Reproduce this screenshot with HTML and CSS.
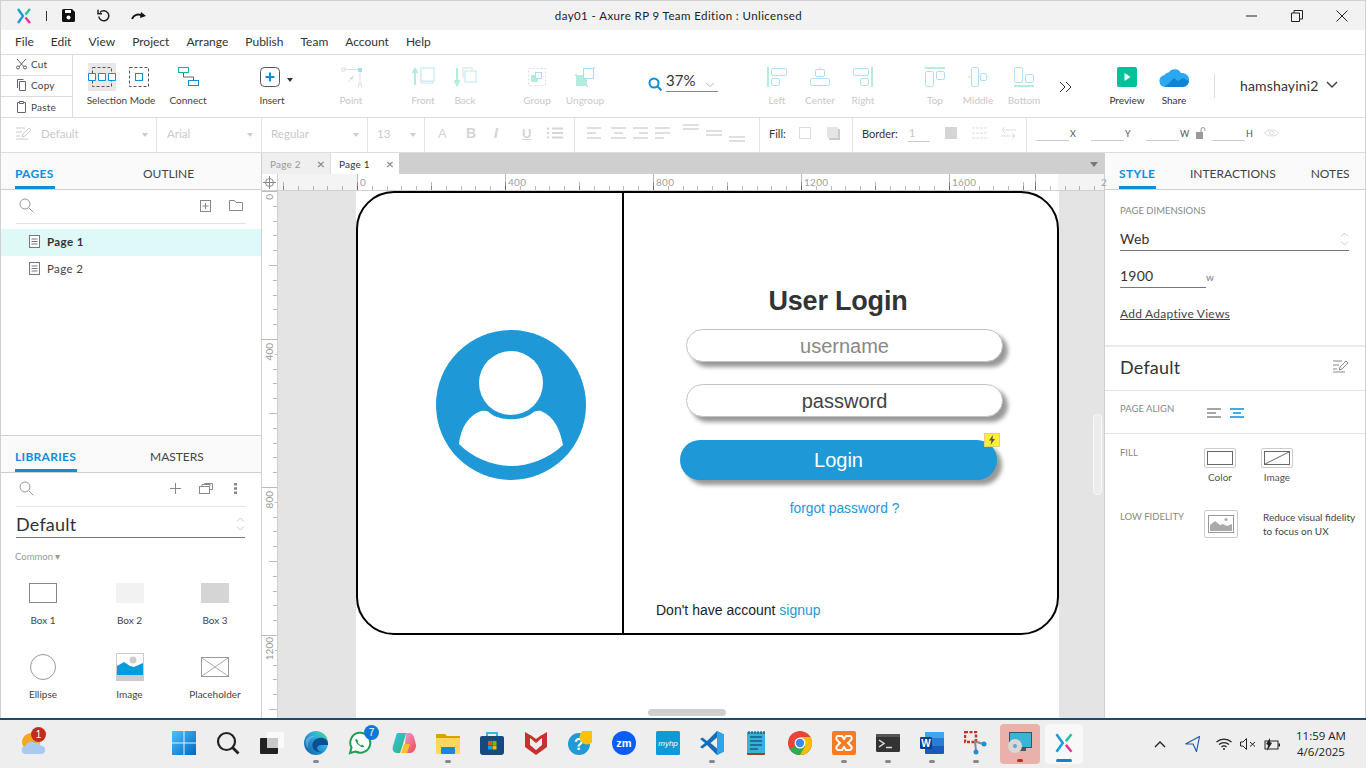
FILE: index.html
```html
<!DOCTYPE html>
<html lang="en">
<head>
    <meta charset="UTF-8">
    <meta name="viewport" content="width=device-width, initial-scale=1.0">
    <title>day01 - Axure RP 9 Team Edition : Unlicensed</title>
    <link rel="stylesheet" href="styles.css">
</head>
<body>
<div class="app">
    <!-- Title bar -->
    <header class="titlebar">
        <div class="quick-actions">
            <svg class="logo" width="14" height="16" viewBox="0 0 14 16"><path d="M1 1l5 7-5 7" fill="none" stroke="#1e9ad6" stroke-width="2.4"/><path d="M13 1L8.5 6.5" fill="none" stroke="#2bbf9b" stroke-width="2.4"/><path d="M8.5 9.5L13 15" fill="none" stroke="#e8358f" stroke-width="2.4"/></svg>
            <span class="quick-sep"></span>
            <svg class="quick-save" width="13" height="13" viewBox="0 0 13 13"><path d="M1.5 0H10l3 3v8.500a1.500 1.500 0 0 1-1.500 1.500h-10A1.500 1.500 0 0 1 0 11.500v-10A1.500 1.500 0 0 1 1.500 0z" fill="#111"/><rect x="3" y="1" width="6" height="3" fill="#fff"/><circle cx="6.500" cy="8.500" r="2" fill="#fff"/></svg>
            <svg class="quick-undo" width="13" height="13" viewBox="0 0 13 13"><path d="M3 3.500A5 5 0 1 1 1.800 7.500" fill="none" stroke="#222" stroke-width="1.500"/><path d="M1 .8v4h4" fill="none" stroke="#222" stroke-width="1.500"/></svg>
            <svg class="quick-redo" width="16" height="10" viewBox="0 0 16 10"><path d="M1 8c1.500-4 6-6 11-3" fill="none" stroke="#111" stroke-width="2"/><path d="M10 1l5 4-6 2z" fill="#111"/></svg>
        </div>
        <div class="window-title">day01 - Axure RP 9 Team Edition : Unlicensed</div>
        <div class="window-controls">
            <svg width="12" height="12" viewBox="0 0 12 12"><path d="M0 6h11" stroke="#222"/></svg>
            <svg width="12" height="12" viewBox="0 0 12 12"><path d="M.5 3h8v8.500h-8zM3 3V.5h8.500V9H8.500" fill="none" stroke="#222"/></svg>
            <svg width="12" height="12" viewBox="0 0 12 12"><path d="M.5.500l11 11M11.500.500l-11 11" stroke="#222"/></svg>
        </div>
    </header>

    <nav class="menubar">
        <span>File</span><span>Edit</span><span>View</span><span>Project</span><span>Arrange</span><span>Publish</span><span>Team</span><span>Account</span><span>Help</span>
    </nav>

    <!-- Main toolbar -->
    <section class="toolbar">
        <div class="clipboard">
            <div class="clip-row"><svg width="12" height="12" viewBox="0 0 12 12"><path d="M1 1l9 10M10 1L1 11" stroke="#666" fill="none"/><circle cx="2" cy="9.500" r="1.500" fill="#fff" stroke="#666"/><circle cx="9" cy="9.500" r="1.500" fill="#fff" stroke="#666"/></svg><span>Cut</span></div>
            <div class="clip-row"><svg width="12" height="12" viewBox="0 0 12 12"><path d="M1.500 9V.5h6M3.500 2.500h6v9h-6z" fill="none" stroke="#666"/></svg><span>Copy</span></div>
            <div class="clip-row"><svg width="12" height="12" viewBox="0 0 12 12"><path d="M3 1.500H1.500v10h8v-10H8M3.500.5h4v2h-4z" fill="none" stroke="#666"/></svg><span>Paste</span></div>
        </div>

        <div class="tool tool-wide ml-13">
            <div class="tool-icon select-icons">
                <svg class="select-active" width="28" height="28" viewBox="0 0 28 28"><rect x="4.500" y="4.500" width="19" height="19" fill="none" stroke="#555" stroke-dasharray="3 2"/><path d="M.5 10.500h7v7h-7zM10.500 10.500h7v7h-7zM20.500 10.500h7v7h-7z" fill="#fff" stroke="#0a8fdc"/></svg>
                <svg width="20" height="20" viewBox="0 0 20 20"><rect x=".5" y=".5" width="19" height="19" fill="none" stroke="#555" stroke-dasharray="3 2"/><rect x="6.500" y="6.500" width="7" height="7" fill="#fff" stroke="#0a8fdc"/></svg>
            </div>
            <span>Selection Mode</span>
        </div>
        <div class="tool tool-50 ml-7">
            <div class="tool-icon"><svg width="21" height="20" viewBox="0 0 21 20"><rect x=".5" y=".5" width="10" height="5" fill="#fff" stroke="#10b592"/><rect x="10.500" y="13.500" width="10" height="5" fill="#fff" stroke="#0a8fdc"/><path d="M5.500 6v4h10v3" fill="none" stroke="#666"/></svg></div>
            <span>Connect</span>
        </div>
        <div class="tool tool-50 ml-34">
            <div class="tool-icon insert-icon">
                <svg width="20" height="20" viewBox="0 0 20 20"><rect x=".5" y=".5" width="19" height="19" rx="4" fill="#fff" stroke="#555"/><path d="M10 5.500v9M5.500 10h9" stroke="#0a8fdc" stroke-width="2"/></svg>
                <i class="caret-dark"></i>
            </div>
            <span>Insert</span>
        </div>
        <div class="tool off ml-33">
            <div class="tool-icon"><svg width="21" height="20" viewBox="0 0 21 20"><path d="M3 2.500h16V18" fill="none" stroke="#ddd"/><rect x="1" y="1" width="3" height="3" fill="#fff" stroke="#ddd"/><rect x="17" y="1" width="4" height="4" fill="#a9dcf5"/><rect x="17.500" y="17" width="3" height="3" fill="#fff" stroke="#ddd"/><path d="M7 14l3-1-1.500-1.500L13 8l-2 5-1-1-2 3z" fill="#d5d5d5"/></svg></div>
            <span>Point</span>
        </div>
        <div class="tool off ml-30">
            <div class="tool-icon"><svg width="23" height="20" viewBox="0 0 23 20"><path d="M3 18V3M.5 6L3 2l2.500 4" fill="none" stroke="#b5ece0" stroke-width="2"/><path d="M11 6V14H19M9 4V16H21V14" fill="none" stroke="#ddd"/><rect x="9" y="1" width="13" height="13" fill="#fff" stroke="#bfe6f8"/></svg></div>
            <span>Front</span>
        </div>
        <div class="tool off">
            <div class="tool-icon"><svg width="23" height="20" viewBox="0 0 23 20"><path d="M3 1v15M.5 13L3 18l2.500-5" fill="none" stroke="#b5ece0" stroke-width="2"/><rect x="9" y="1" width="9" height="9" fill="#fff" stroke="#ddd"/><rect x="11" y="4" width="11" height="11" fill="#fff" stroke="#bfe6f8"/></svg></div>
            <span>Back</span>
        </div>
        <div class="tool off ml-30">
            <div class="tool-icon"><svg width="20" height="20" viewBox="0 0 20 20"><rect x="1.500" y="1.500" width="17" height="17" fill="none" stroke="#ddd" stroke-dasharray="2 2"/><rect x="4" y="8" width="7" height="7" fill="#b5ece0"/><rect x="8.500" y="5.500" width="6" height="6" fill="#fff" stroke="#a9dcf5"/></svg></div>
            <span>Group</span>
        </div>
        <div class="tool off ml-6">
            <div class="tool-icon"><svg width="20" height="20" viewBox="0 0 20 20"><rect x="1" y="8" width="11" height="11" fill="#b5ece0"/><rect x="8.500" y="1.500" width="10" height="10" fill="#fff" stroke="#a9dcf5"/><rect x="0" y="7" width="2" height="2" fill="#ddd"/><rect x="18" y="0" width="2" height="2" fill="#ddd"/><rect x="11" y="18" width="2" height="2" fill="#ddd"/></svg></div>
            <span>Ungroup</span>
        </div>
        <div class="zoom-field ml-42">
            <svg width="14" height="14" viewBox="0 0 14 14"><circle cx="6" cy="6" r="4.500" fill="none" stroke="#0a8fdc" stroke-width="2"/><path d="M9.500 9.500l4 4" stroke="#0a8fdc" stroke-width="2"/></svg>
            <div class="zoom-value"><span>37%</span><svg width="10" height="6" viewBox="0 0 10 6"><path d="M1 1l4 3.500L9 1" fill="none" stroke="#bbb"/></svg></div>
        </div>
        <div class="tool off ml-37">
            <div class="tool-icon"><svg width="20" height="20" viewBox="0 0 20 20"><path d="M1 0v20" stroke="#b5ece0" stroke-width="2"/><rect x="4.500" y="1.500" width="15" height="7" rx="1.500" fill="none" stroke="#b0e0f7"/><rect x="4.500" y="11.500" width="8" height="7" rx="1.500" fill="none" stroke="#b0e0f7"/></svg></div>
            <span>Left</span>
        </div>
        <div class="tool off ml-1">
            <div class="tool-icon"><svg width="20" height="20" viewBox="0 0 20 20"><path d="M10 0v20" stroke="#b5ece0"/><rect x="5.500" y="2.500" width="9" height="7" rx="1.500" fill="#fff" stroke="#b0e0f7"/><rect x=".5" y="11.500" width="19" height="7" rx="1.500" fill="#fff" stroke="#b0e0f7"/></svg></div>
            <span>Center</span>
        </div>
        <div class="tool off ml-1">
            <div class="tool-icon"><svg width="20" height="20" viewBox="0 0 20 20"><path d="M19 0v20" stroke="#b5ece0" stroke-width="2"/><rect x=".5" y="1.500" width="15" height="7" rx="1.500" fill="none" stroke="#b0e0f7"/><rect x="7.500" y="11.500" width="8" height="7" rx="1.500" fill="none" stroke="#b0e0f7"/></svg></div>
            <span>Right</span>
        </div>
        <div class="tool off ml-30">
            <div class="tool-icon"><svg width="20" height="20" viewBox="0 0 20 20"><path d="M0 1h20" stroke="#b5ece0" stroke-width="2"/><rect x=".5" y="4.500" width="8" height="15" rx="1.500" fill="none" stroke="#b0e0f7"/><rect x="11.500" y="4.500" width="8" height="8" rx="1.500" fill="none" stroke="#b0e0f7"/></svg></div>
            <span>Top</span>
        </div>
        <div class="tool off ml-1">
            <div class="tool-icon"><svg width="20" height="20" viewBox="0 0 20 20"><path d="M0 10h20" stroke="#b5ece0"/><rect x="3.500" y=".5" width="7" height="19" rx="1.500" fill="#fff" stroke="#b0e0f7"/><rect x="12.500" y="6.500" width="6" height="7" rx="1.500" fill="#fff" stroke="#b0e0f7"/></svg></div>
            <span>Middle</span>
        </div>
        <div class="tool off ml-4">
            <div class="tool-icon"><svg width="20" height="20" viewBox="0 0 20 20"><path d="M0 19h20" stroke="#b5ece0" stroke-width="2"/><rect x=".5" y=".5" width="8" height="15" rx="1.500" fill="none" stroke="#b0e0f7"/><rect x="11.500" y="7.500" width="8" height="8" rx="1.500" fill="none" stroke="#b0e0f7"/></svg></div>
            <span>Bottom</span>
        </div>
        <svg class="more-tools" width="13" height="12" viewBox="0 0 13 12"><path d="M1 1l5 5-5 5M7 1l5 5-5 5" fill="none" stroke="#333"/></svg>
        <div class="tool strong ml-34">
            <div class="tool-icon"><svg width="20" height="20" viewBox="0 0 20 20"><rect width="20" height="20" rx="2" fill="#00c29a"/><path d="M7.500 6l6 4-6 4z" fill="#fff"/></svg></div>
            <span>Preview</span>
        </div>
        <div class="tool strong ml-5">
            <div class="tool-icon"><svg width="30" height="20" viewBox="0 0 30 20"><path d="M6 20a6 6 0 0 1-1-11.800 8 8 0 0 1 5-3A7 7 0 0 1 22 6a7 7 0 0 1 8 7.500 6.500 6.500 0 0 1-6 6.500z" fill="#2aa8f2"/><path d="M6 20l9-9 4 3 5-3 6 3a6.500 6.500 0 0 1-6 6z" fill="#0a84d8"/></svg></div>
            <span>Share</span>
        </div>
        <span class="tool-sep"></span>
        <div class="user-menu">
            <span>hamshayini2</span>
            <svg width="12" height="8" viewBox="0 0 12 8"><path d="M1 1l5 5 5-5" fill="none" stroke="#444" stroke-width="1.500"/></svg>
        </div>
    </section>

    <!-- Format bar -->
    <section class="formatbar">
        <div class="fmt fmt-style">
            <svg width="15" height="13" viewBox="0 0 15 13"><path d="M0 1h9M0 5h6M0 9h4M0 12h12M6 10l1-3 6-6 2 2-6 6z" fill="none" stroke="#ccc"/></svg>
            <span>Default</span><i class="caret-light"></i>
        </div>
        <div class="fmt fmt-font"><span>Arial</span><i class="caret-light"></i></div>
        <div class="fmt fmt-weight"><span>Regular</span><i class="caret-light"></i></div>
        <div class="fmt fmt-size"><span>13</span><i class="caret-light"></i></div>
        <div class="fmt fmt-text">
            <span class="glyph">A</span><span class="glyph bold">B</span><span class="glyph ital">I</span><span class="glyph under">U</span>
            <svg width="16" height="12" viewBox="0 0 16 12"><path d="M5 1.500h11M5 6h11M5 10.500h11M0 1.500h2M0 6h2M0 10.500h2" stroke="#d5d5d5" stroke-width="2"/></svg>
        </div>
        <div class="fmt fmt-align">
            <svg width="17" height="12" viewBox="0 0 17 12"><path d="M3 1h14M3 6h9M3 11h14" transform="translate(-3)" stroke="#d5d5d5" stroke-width="1.500"/></svg>
            <svg width="15" height="12" viewBox="0 0 15 12"><path d="M0 1h15M3 6h9M0 11h15" stroke="#d5d5d5" stroke-width="1.500"/></svg>
            <svg width="15" height="12" viewBox="0 0 15 12"><path d="M0 1h15M6 6h9M0 11h15" stroke="#d5d5d5" stroke-width="1.500"/></svg>
            <svg width="15" height="12" viewBox="0 0 15 12"><path d="M0 1h15M0 6h15M0 11h9" stroke="#d5d5d5" stroke-width="1.500"/></svg>
            <svg class="valign" width="16" height="18" viewBox="0 0 16 18"><path d="M0 1h16M0 5h16" stroke="#d5d5d5" stroke-width="1.500"/></svg>
            <svg class="valign" width="16" height="18" viewBox="0 0 16 18"><path d="M0 7h16M0 11h16" stroke="#d5d5d5" stroke-width="1.500"/></svg>
            <svg class="valign" width="16" height="18" viewBox="0 0 16 18"><path d="M0 13h16M0 17h16" stroke="#d5d5d5" stroke-width="1.500"/></svg>
        </div>
        <div class="fmt fmt-fill">
            <span class="fmt-label">Fill:</span>
            <span class="swatch"></span>
            <svg width="13" height="13" viewBox="0 0 13 13"><rect x="2" y="2" width="11" height="11" fill="#ccc"/><rect width="11" height="11" fill="#e5e5e5"/></svg>
        </div>
        <div class="fmt fmt-border">
            <span class="fmt-label">Border:</span>
            <span class="border-width">1</span>
            <span class="border-box"></span>
            <svg width="15" height="12" viewBox="0 0 15 12"><path d="M0 1h15M0 6h15M0 11h15" stroke="#ddd" stroke-dasharray="3 1"/></svg>
            <svg width="15" height="12" viewBox="0 0 15 12"><path d="M1 3h14M4 0L1 3l3 3M0 9h14M11 6l3 3-3 3" fill="none" stroke="#ddd"/></svg>
        </div>
        <div class="fmt fmt-coords">
            <span class="coord"></span><b>X</b>
            <span class="coord"></span><b>Y</b>
            <span class="coord"></span><b>W</b>
            <svg class="lock" width="10" height="12" viewBox="0 0 10 12"><rect y="5" width="7" height="7" fill="#999"/><path d="M5 5V2.500a2 2 0 0 1 4 0V4" fill="none" stroke="#999"/></svg>
            <span class="coord"></span><b>H</b>
            <svg class="eye" width="15" height="10" viewBox="0 0 15 10"><path d="M.5 5C3 1 12 1 14.500 5 12 9 3 9 .5 5z" fill="none" stroke="#ddd"/><circle cx="7.500" cy="5" r="2" fill="none" stroke="#ddd"/></svg>
        </div>
    </section>

    <main class="workspace">
        <!-- Left sidebar -->
        <aside class="sidebar">
            <section class="pages-panel">
                <div class="panel-tabs">
                    <span class="panel-tab active pages-tab">PAGES</span>
                    <span class="panel-tab outline-tab">OUTLINE</span>
                </div>
                <div class="search-row">
                    <svg class="search-glass" width="15" height="15" viewBox="0 0 15 15"><circle cx="6" cy="6" r="5" fill="none" stroke="#999"/><path d="M9.500 9.500l5 5" stroke="#999"/></svg>
                    <svg class="search-action" width="11" height="12" viewBox="0 0 11 12"><rect x=".5" y=".5" width="10" height="11" fill="none" stroke="#888"/><path d="M5.500 3v6M2.500 6h6" stroke="#888"/></svg>
                    <svg class="search-action wide" width="14" height="11" viewBox="0 0 14 11"><path d="M.5 10.500V.5h5l1.500 2h6.500v8z" fill="none" stroke="#888"/></svg>
                </div>
                <ul class="page-list">
                    <li class="selected"><svg width="11" height="13" viewBox="0 0 11 13"><rect x=".5" y=".5" width="10" height="12" fill="#fff" stroke="#777"/><path d="M2.500 4h6M2.500 6.500h6M2.500 9h6" stroke="#777"/></svg>Page 1</li>
                    <li><svg width="11" height="13" viewBox="0 0 11 13"><rect x=".5" y=".5" width="10" height="12" fill="#fff" stroke="#777"/><path d="M2.500 4h6M2.500 6.500h6M2.500 9h6" stroke="#777"/></svg>Page 2</li>
                </ul>
            </section>
            <section class="library-panel">
                <div class="panel-tabs">
                    <span class="panel-tab active libraries-tab">LIBRARIES</span>
                    <span class="panel-tab masters-tab">MASTERS</span>
                </div>
                <div class="search-row lib-search">
                    <svg class="search-glass" width="15" height="15" viewBox="0 0 15 15"><circle cx="6" cy="6" r="5" fill="none" stroke="#999"/><path d="M9.500 9.500l5 5" stroke="#999"/></svg>
                    <svg class="search-action" width="11" height="11" viewBox="0 0 11 11"><path d="M5.500 0v11M0 5.500h11" stroke="#888"/></svg>
                    <svg class="search-action mid" width="14" height="11" viewBox="0 0 14 11"><rect x=".5" y="3.500" width="10" height="7" fill="#fff" stroke="#888"/><path d="M3 3V1.500h8V3M5.500 1V.5h8v6H11" fill="none" stroke="#888"/></svg>
                    <svg class="search-action dots" width="3" height="11" viewBox="0 0 3 11"><path d="M0 0h3v2.500H0zM0 4.200h3v2.500H0zM0 8.500h3V11H0z" fill="#888"/></svg>
                </div>
                <div class="select-field lib-select">
                    <span>Default</span>
                    <svg width="9" height="14" viewBox="0 0 9 14"><path d="M1 4.500L4.500 1 8 4.500M1 9.500L4.500 13 8 9.500" fill="none" stroke="#ccc"/></svg>
                </div>
                <div class="lib-group">Common &#9662;</div>
                <div class="widget-grid">
                    <div class="widget"><span class="w-box w-box1"></span><label>Box 1</label></div>
                    <div class="widget"><span class="w-box w-box2"></span><label>Box 2</label></div>
                    <div class="widget"><span class="w-box w-box3"></span><label>Box 3</label></div>
                    <div class="widget">
                        <svg width="28" height="28" viewBox="0 0 28 28"><circle cx="14" cy="14" r="12.500" fill="#fff" stroke="#999"/></svg>
                        <label>Ellipse</label>
                    </div>
                    <div class="widget">
                        <svg width="28" height="28" viewBox="0 0 28 28"><rect x=".5" y=".5" width="27" height="27" fill="#fff" stroke="#ccc"/><rect y="22" width="28" height="6" fill="#ccc"/><path d="M1 22v-9l7-4 6 4 4 1 9-4v12z" fill="#009ddc"/><circle cx="17" cy="7" r="3.500" fill="#ccc"/></svg>
                        <label>Image</label>
                    </div>
                    <div class="widget">
                        <svg width="28" height="28" viewBox="0 0 28 28"><rect x=".5" y="4.500" width="27" height="19" fill="#fff" stroke="#999"/><path d="M1 5l26 18M27 5L1 23" stroke="#aaa"/></svg>
                        <label>Placeholder</label>
                    </div>
                </div>
            </section>
        </aside>

        <!-- Canvas area -->
        <section class="editor">
            <div class="doc-tabs">
                <div class="doc-tab">Page 2<span class="tab-x">&#215;</span></div>
                <div class="doc-tab current">Page 1<span class="tab-x">&#215;</span></div>
                <i class="doc-caret"></i>
            </div>
            <div class="ruler-top">
                <div class="ruler-corner"><svg width="13" height="13" viewBox="0 0 13 13"><circle cx="6.500" cy="6.500" r="4" fill="none" stroke="#888"/><path d="M6.500 0v13M0 6.500h13" stroke="#888"/></svg></div>
                <div class="h-ruler">
                    <span class="h-mark mark-0">0</span>
                    <span class="h-mark mark-400">400</span>
                    <span class="h-mark mark-800">800</span>
                    <span class="h-mark mark-1200">1200</span>
                    <span class="h-mark mark-1600">1600</span>
                    <span class="h-mark mark-2000">2</span>
                </div>
            </div>
            <div class="canvas-row">
                <div class="v-ruler">
                    <span class="v-mark vm-0">0</span>
                    <span class="v-mark vm-400">400</span>
                    <span class="v-mark vm-800">800</span>
                    <span class="v-mark vm-1200">1200</span>
                </div>
                <div class="canvas">
                    <div class="page-sheet">
                        <!-- The wireframe being edited -->
                        <div class="artboard">
                            <div class="art-left">
                                <svg width="150" height="150" viewBox="0 0 150 150"><circle cx="75" cy="75" r="75" fill="#1e98d7"/><circle cx="75" cy="53" r="32" fill="#fff"/><path d="M23 114c2-14 7-27 22-33 4-1 8 0 10 3 10 7 30 7 40 0 3-3 7-4 10-3 14 6 19 19 22 34-15 14-34 21-52 21s-38-8-52-22z" fill="#fff"/></svg>
                            </div>
                            <div class="art-right">
                                <h1 class="login-title">User Login</h1>
                                <div class="login-input muted">username</div>
                                <div class="login-input">password</div>
                                <div class="login-button">Login
                                    <span class="interaction-badge"><svg width="8" height="10" viewBox="0 0 8 10"><path d="M5 0L1 5.500h2.500L2.500 10 7 4H4.500z" fill="#555"/></svg></span>
                                </div>
                                <a class="forgot">forgot password ?</a>
                                <p class="signup">Don't have account <a>signup</a></p>
                            </div>
                        </div>
                    </div>
                    <span class="scroll-v"></span>
                    <span class="scroll-h"></span>
                </div>
            </div>
        </section>

        <!-- Right sidebar -->
        <aside class="inspector">
            <div class="panel-tabs">
                <span class="panel-tab active style-tab">STYLE</span>
                <span class="panel-tab interactions-tab">INTERACTIONS</span>
                <span class="panel-tab notes-tab">NOTES</span>
            </div>
            <div class="insp-block dims">
                <div class="insp-label">PAGE DIMENSIONS</div>
                <div class="select-field web-select">
                    <span>Web</span>
                    <svg width="9" height="14" viewBox="0 0 9 14"><path d="M1 4.500L4.500 1 8 4.500M1 9.500L4.500 13 8 9.500" fill="none" stroke="#ccc"/></svg>
                </div>
                <div class="width-row"><span class="width-value">1900</span><span class="width-unit">w</span></div>
                <a class="adaptive">Add Adaptive Views</a>
            </div>
            <div class="style-name">
                <span>Default</span>
                <svg width="15" height="13" viewBox="0 0 15 13"><path d="M0 1h9M0 5h6M0 9h4M0 12h12M6 10l1-3 6-6 2 2-6 6z" fill="none" stroke="#888"/></svg>
            </div>
            <div class="insp-row align-row">
                <div class="insp-label">PAGE ALIGN</div>
                <div class="align-btns">
                    <svg width="14" height="10" viewBox="0 0 14 10"><path d="M0 1h14M0 5h9M0 9h14" stroke="#888" stroke-width="1.500"/></svg>
                    <svg width="14" height="10" viewBox="0 0 14 10"><path d="M0 1h14M3 5h8M0 9h14" stroke="#0a8fdc" stroke-width="1.500"/></svg>
                </div>
            </div>
            <div class="insp-fill">
                <div class="insp-label">FILL</div>
                <div class="fill-option">
                    <span class="fill-btn"><svg width="26" height="14" viewBox="0 0 26 14"><rect x=".5" y=".5" width="25" height="13" fill="#fff" stroke="#666"/></svg></span>
                    <label>Color</label>
                </div>
                <div class="fill-option">
                    <span class="fill-btn"><svg width="26" height="14" viewBox="0 0 26 14"><rect x=".5" y=".5" width="25" height="13" fill="#fff" stroke="#666"/><path d="M1 13L25 1" stroke="#666"/></svg></span>
                    <label>Image</label>
                </div>
            </div>
            <div class="insp-lowfi">
                <div class="insp-label">LOW FIDELITY</div>
                <span class="lowfi-btn"><svg width="26" height="18" viewBox="0 0 26 18"><rect x=".5" y=".5" width="25" height="17" fill="#fff" stroke="#999"/><path d="M2 16v-6l5-4 5 4 3-1 4 2 5-2v7z" fill="#aaa"/><circle cx="18" cy="4.500" r="1.500" fill="#aaa"/></svg></span>
                <p>Reduce visual fidelity<br>to focus on UX</p>
            </div>
        </aside>
    </main>
</div>

<!-- Windows taskbar -->
<footer class="taskbar">
    <div class="weather">
        <svg width="24" height="24" viewBox="0 0 24 24"><circle cx="10" cy="11" r="9" fill="#f5a623"/><path d="M5 23a4 4 0 0 1-.5-8 6 6 0 0 1 9.500-3 5 5 0 0 1 6 3 4 4 0 0 1 .5 8z" fill="#a9c9ee"/></svg>
        <span class="notify-red">1</span>
    </div>
    <div class="task-icons">
        <div class="slot"><svg width="24" height="24" viewBox="0 0 24 24"><defs><linearGradient id="win" x1="0" y1="0" x2="1" y2="1"><stop offset="0" stop-color="#4cc2ff"/><stop offset="1" stop-color="#0067c0"/></linearGradient></defs><path d="M0 0h11.500v11.500H0zM12.500 0H24v11.500H12.500zM0 12.500h11.500V24H0zM12.500 12.500H24V24H12.500z" fill="url(#win)"/></svg></div>
        <div class="slot"><svg width="24" height="24" viewBox="0 0 24 24"><circle cx="10.500" cy="10.500" r="8.500" fill="none" stroke="#222" stroke-width="2.200"/><path d="M16.500 16.500l6 6" stroke="#222" stroke-width="2.800"/></svg></div>
        <div class="slot"><svg width="24" height="24" viewBox="0 0 24 24"><rect x="7" y="1" width="17" height="16" rx="1" fill="#fafafa"/><rect x="0" y="7" width="18" height="16" rx="1" fill="#222"/><rect x="7" y="7" width="11" height="10" fill="#c9c9c9"/></svg></div>
        <div class="slot running"><svg width="24" height="24" viewBox="0 0 24 24"><defs><linearGradient id="edge" x1="0" y1="1" x2="1" y2="0"><stop offset="0" stop-color="#0c59a4"/><stop offset=".6" stop-color="#2fa9e0"/><stop offset="1" stop-color="#5fdc7a"/></linearGradient></defs><circle cx="12" cy="12" r="12" fill="url(#edge)"/><path d="M24 13c0-5-5-7-9-6-5 1-8 5-6 10 1 3 5 5 9 4-3 0-5-2-5-4s2-3 5-3h6z" fill="#0a4f94"/><path d="M2 9c2-4 7-5 11-4-4 0-8 3-9 8 0 2 0 4 1 5-3-3-4-6-3-9z" fill="#fff" opacity=".25"/></svg></div>
        <div class="slot"><svg width="24" height="24" viewBox="0 0 24 24"><path d="M2 22l1.500-5.500A10 10 0 1 1 7.500 20.500z" fill="#fff" stroke="#1f9d55" stroke-width="2"/><path d="M8 7.500c-1.500 2 .5 5 2.500 6.500 2 1.800 4.500 3 6 1.500l-2.500-2-1 1c-1.500-.7-2.800-2-3.500-3.500l1-1z" fill="#1f9d55"/></svg><span class="notify-blue">7</span></div>
        <div class="slot"><svg width="24" height="24" viewBox="0 0 24 24"><defs><linearGradient id="cop1" x1="0" y1="0" x2="1" y2="1"><stop offset="0" stop-color="#34c1f2"/><stop offset="1" stop-color="#2fb56e"/></linearGradient><linearGradient id="cop2" x1="0" y1="0" x2="1" y2="1"><stop offset="0" stop-color="#f2a0e0"/><stop offset="1" stop-color="#ee4a4a"/></linearGradient></defs><path d="M6 2h8l-3 11-3 9H5c-4 0-5-4-4-7l3-10c0-2 1-3 2-3z" fill="url(#cop1)"/><path d="M14 2h3c3 0 4 2 5 4l2 8c0 4-2 7-5 8h-9l3-9z" fill="url(#cop2)"/><path d="M9 22l3-9h6l-3 9z" fill="#f7c12e"/></svg></div>
        <div class="slot running"><svg width="24" height="24" viewBox="0 0 24 24"><path d="M0 3h9l2 2h13v17H0z" fill="#d9a400"/><path d="M0 7h24v16H0z" fill="#ffd75e"/><rect x="5" y="16" width="14" height="7" rx="1" fill="#1b86d4"/></svg></div>
        <div class="slot"><svg width="24" height="24" viewBox="0 0 24 24"><path d="M7 6V2h10v4" fill="none" stroke="#35b8e8" stroke-width="2"/><path d="M0 7a2 2 0 0 1 2-2h20a2 2 0 0 1 2 2v14a3 3 0 0 1-3 3H3a3 3 0 0 1-3-3z" fill="#15497f"/><path d="M8 10h4v4H8z" fill="#f25022"/><path d="M12.500 10h4v4h-4z" fill="#7fba00"/><path d="M8 14.500h4v4H8z" fill="#00a4ef"/><path d="M12.500 14.500h4v4h-4z" fill="#ffb900"/></svg></div>
        <div class="slot"><svg width="22" height="24" viewBox="0 0 22 24"><path d="M0 1l5 3h.5L11 8l5.500-4h.5l5-3v15l-11 8L0 16z" fill="#c8322e"/><path d="M5 7v7l6 5 6-5V7l-6 5z" fill="#eeeeee"/></svg></div>
        <div class="slot"><svg width="24" height="24" viewBox="0 0 24 24"><circle cx="11" cy="13" r="11" fill="#1f9ad6"/><text x="11" y="19" class="icon-text help-q">?</text><circle cx="19" cy="6" r="7.500" fill="#ffc107"/></svg></div>
        <div class="slot"><svg width="24" height="24" viewBox="0 0 24 24"><circle cx="12" cy="12" r="12" fill="#0b5cff"/><text x="12" y="16" class="icon-text zm">zm</text></svg></div>
        <div class="slot"><svg width="24" height="24" viewBox="0 0 24 24"><rect width="24" height="24" rx="1.500" fill="#0f9ad6"/><text x="12" y="15" class="icon-text myhp">myhp</text></svg></div>
        <div class="slot running"><svg width="24" height="24" viewBox="0 0 24 24"><path d="M17 0l7 3.500v17L17 24 7 14l-4.500 3.500L0 16l5-4-5-4 2.500-1.500L7 10z" fill="#0e6fb8"/><path d="M17 0l7 3.500v17L17 24z" fill="#2aa5ee"/><path d="M17 6.500L10.500 12l6.500 5.500z" fill="#eeeeee"/></svg></div>
        <div class="slot"><svg width="18" height="24" viewBox="0 0 18 24"><rect y="1" width="18" height="23" rx="1" fill="#8b4a20"/><rect y="1" width="18" height="21" fill="#3bb0d8"/><path d="M3 6h12M3 10h12M3 14h12M3 18h8" stroke="#0f5f8a" stroke-width="1.500"/><path d="M2 0v3M5 0v3M8 0v3M11 0v3M14 0v3M17 0v3" stroke="#134" /></svg></div>
        <div class="slot"><svg width="24" height="24" viewBox="0 0 24 24"><circle cx="12" cy="12" r="12" fill="#ea4335"/><path d="M12 12L1.600 18A12 12 0 0 0 12 24a12 12 0 0 0 10.400-6z" fill="#34a853"/><path d="M12 6h10.400A12 12 0 0 1 12 24l5.200-9z" fill="#fbbc05"/><circle cx="12" cy="12" r="5.500" fill="#fff"/><circle cx="12" cy="12" r="4.200" fill="#4285f4"/></svg></div>
        <div class="slot running"><svg width="24" height="24" viewBox="0 0 24 24"><rect width="24" height="24" rx="2" fill="#f57c24"/><path d="M6 5h4l2 3 2-3h4c2 0 2 3 1 4l-3 3 3 3c1 1 1 4-1 4h-4l-2-3-2 3H6c-2 0-2-3-1-4l3-3-3-3C4 8 4 5 6 5z" fill="none" stroke="#fff" stroke-width="2"/></svg></div>
        <div class="slot running"><svg width="24" height="18" viewBox="0 0 24 18"><rect width="24" height="18" rx="1.500" fill="#333"/><rect width="24" height="3" fill="#555"/><path d="M3 6l5 3.500L3 13" fill="none" stroke="#ddd" stroke-width="1.500"/><path d="M10 13.500h6" stroke="#ddd" stroke-width="1.500"/></svg></div>
        <div class="slot running"><svg width="24" height="24" viewBox="0 0 24 24"><rect x="5" y="1" width="19" height="22" rx="1" fill="#185abd"/><rect x="5" y="1" width="19" height="6" fill="#41a5ee"/><rect x="5" y="7" width="19" height="8" fill="#2b7cd3"/><rect y="6" width="12" height="12" rx="1" fill="#103f91"/><text x="6" y="15.500" class="icon-text word">W</text></svg></div>
        <div class="slot running"><svg width="24" height="24" viewBox="0 0 24 24"><rect x="1" y="1" width="11" height="10" fill="none" stroke="#c8321e" stroke-width="2.500" stroke-dasharray="3 1.500"/><path d="M10 10l9 3M11 10l1 10" stroke="#888" stroke-width="2"/><circle cx="20" cy="13" r="2.500" fill="#1e8fd6"/><circle cx="12" cy="21" r="2.500" fill="#1e8fd6"/></svg></div>
        <div class="slot highlighted"><svg width="24" height="22" viewBox="0 0 24 22"><rect x="1" y="0" width="23" height="16" fill="#2a5b74"/><rect x="2" y="1" width="21" height="14" fill="#38b4d4"/><path d="M10 16h8v3h-8z" fill="#555"/><circle cx="7" cy="14" r="7" fill="#d8d8d8"/><circle cx="7" cy="14" r="2" fill="#6aa0d6"/></svg></div>
        <div class="slot active-app"><svg width="18" height="20" viewBox="0 0 14 16"><path d="M1 1l5 7-5 7" fill="none" stroke="#1e9ad6" stroke-width="2"/><path d="M13 1L8.500 6.500" fill="none" stroke="#2bbf9b" stroke-width="2"/><path d="M8.500 9.500L13 15" fill="none" stroke="#e8358f" stroke-width="2"/></svg></div>
    </div>
    <div class="tray">
        <svg class="tray-chevron" width="12" height="7" viewBox="0 0 12 7"><path d="M1 6l5-5 5 5" fill="none" stroke="#222" stroke-width="1.400"/></svg>
        <svg class="tray-send" width="15" height="16" viewBox="0 0 15 16"><path d="M.5 8L14.500.5 11.500 15.500 8 8z" fill="none" stroke="#1f5fa8" stroke-width="1.200"/></svg>
        <svg class="tray-wifi" width="16" height="12" viewBox="0 0 16 12"><path d="M.5 4a11 11 0 0 1 15 0M3 6.500a7.500 7.500 0 0 1 10 0M5.500 9a3.500 3.500 0 0 1 5 0" fill="none" stroke="#222" stroke-width="1.200"/><circle cx="8" cy="11" r="1" fill="#222"/></svg>
        <svg class="tray-sound" width="16" height="12" viewBox="0 0 16 12"><path d="M.5 4h2.500L6.500.5v11L3 8H.5zM10 4l5 4.500M15 4l-5 4.500" fill="none" stroke="#222"/></svg>
        <svg class="tray-battery" width="16" height="13" viewBox="0 0 16 13"><rect x="1" y="3" width="13" height="8" fill="none" stroke="#222"/><path d="M14.500 5.500h1.500v3h-1.500z" fill="#222"/><path d="M6 0L2 6l2 1-1 6 5-8-2-1z" fill="#222"/></svg>
        <div class="clock"><span>11:59 AM</span><span>4/6/2025</span></div>
    </div>
</footer>
</body>
</html>
```

FILE: styles.css
```css
* {
    box-sizing: border-box;
}

body {
    margin: 0;
    width: 1366px;
    height: 768px;
    overflow: hidden;
    font-family: Lato, "Open Sans", sans-serif;
    font-size: 11px;
    color: #333;
    background-color: #fff;
}

svg {
    display: block;
    flex: none;
}

.app {
    height: 718px;
    display: flex;
    flex-direction: column;
    border-left: 1px solid #d0d0d0;
    border-right: 1px solid #d0d0d0;
}

/* Title bar */
.titlebar {
    height: 30px;
    flex: none;
    background-color: #f2f2f2;
    border-top: 1px solid #d0d0d0;
    display: grid;
    grid-template-columns: 1fr auto 1fr;
    align-items: center;
}

.quick-actions {
    display: flex;
    align-items: center;
    padding-left: 16px;
}

.quick-sep {
    width: 1px;
    height: 10px;
    background-color: #333;
    margin-left: 15px;
}

.quick-save {
    margin-left: 15px;
}

.quick-undo {
    margin-left: 22px;
}

.quick-redo {
    margin-left: 21px;
}

.window-title {
    font-size: 11.5px;
    letter-spacing: 0.41px;
    color: #222;
    padding-right: 9px;
}

.window-controls {
    display: flex;
    justify-content: flex-end;
    gap: 33px;
    padding-right: 17px;
}

/* Menu */
.menubar {
    height: 25px;
    flex: none;
    display: flex;
    align-items: center;
    gap: 17px;
    padding: 0 0 2px 14px;
    font-size: 12px;
    color: #333;
    border-bottom: 1px solid #ddd;
}

/* Toolbar */
.toolbar {
    height: 63px;
    flex: none;
    display: flex;
    border-bottom: 1px solid #ddd;
}

.clipboard {
    width: 72px;
    flex: none;
    border-right: 1px solid #ddd;
}

.clip-row {
    height: 21px;
    display: flex;
    align-items: center;
    gap: 3px;
    padding: 0 0 2px 15px;
    font-size: 10px;
    letter-spacing: 0.2px;
    color: #444;
    border-bottom: 1px solid #ddd;
}

.clip-row:last-child {
    border-bottom: 0;
}

.tool {
    width: 42px;
    flex: none;
    display: flex;
    flex-direction: column;
    align-items: center;
    padding-top: 12px;
    font-size: 10px;
    white-space: nowrap;
    color: #444;
}

.tool-wide {
    width: 70px;
}

.tool-50 {
    width: 50px;
}

.tool.off {
    color: #c9c9c9;
}

.tool.strong {
    color: #333;
}

.tool-icon {
    height: 20px;
    display: flex;
    align-items: center;
    justify-content: center;
    margin-bottom: 7px;
}

.select-icons {
    align-self: flex-start;
    margin-left: 2px;
    gap: 13px;
}

.select-active {
    background-color: #e8e8e8;
}

.insert-icon {
    position: relative;
    padding-right: 4px;
}

.caret-dark {
    position: absolute;
    left: 27px;
    top: 11px;
    border-left: 3.5px solid transparent;
    border-right: 3.5px solid transparent;
    border-top: 4px solid #333;
}

.ml-1 { margin-left: 1px; }
.ml-4 { margin-left: 4px; }
.ml-5 { margin-left: 5px; }
.ml-6 { margin-left: 6px; }
.ml-7 { margin-left: 7px; }
.ml-13 { margin-left: 13px; }
.ml-30 { margin-left: 30px; }
.ml-33 { margin-left: 33px; }
.ml-34 { margin-left: 34px; }
.ml-37 { margin-left: 37px; }
.ml-42 { margin-left: 42px; }

.zoom-field {
    width: 71px;
    flex: none;
    display: flex;
    align-items: flex-start;
    gap: 4px;
    padding-top: 22px;
}

.zoom-value {
    width: 52px;
    height: 17px;
    margin-top: -2px;
    display: flex;
    align-items: flex-end;
    justify-content: space-between;
    padding: 0 3px 3px 0;
    border-bottom: 1px solid #888;
    font-size: 15px;
    line-height: 15px;
    color: #333;
}

.more-tools {
    margin: 26px 0 0 14px;
}

.tool-sep {
    width: 1px;
    height: 24px;
    margin: 19px 0 0 19px;
    background-color: #ddd;
}

.user-menu {
    display: flex;
    align-items: center;
    gap: 8px;
    height: 62px;
    padding-bottom: 2px;
    margin-left: 25px;
    font-size: 14px;
    letter-spacing: 0.15px;
    color: #333;
}

/* Format bar */
.formatbar {
    height: 35px;
    flex: none;
    display: flex;
    border-bottom: 1px solid #ddd;
    color: #c9c9c9;
    font-size: 11.5px;
}

.fmt {
    height: 34px;
    flex: none;
    display: flex;
    align-items: center;
    padding-bottom: 4px;
    border-right: 1px solid #e3e3e3;
    position: relative;
}

.caret-light {
    position: absolute;
    right: 8px;
    top: 15px;
    border-left: 3.5px solid transparent;
    border-right: 3.5px solid transparent;
    border-top: 4px solid #ccc;
}

.fmt-style {
    width: 156px;
    padding-left: 15px;
    gap: 10px;
}

.fmt-font {
    width: 105px;
    padding-left: 10px;
}

.fmt-weight {
    width: 106px;
    padding-left: 9px;
}

.fmt-size {
    width: 57px;
    padding-left: 9px;
}

.fmt-text {
    width: 150px;
    padding-left: 13px;
    gap: 0;
}

.glyph {
    width: 28px;
    font-size: 13px;
    font-family: "Liberation Sans", sans-serif;
    color: #d5d5d5;
}

.glyph.bold {
    font-weight: bold;
    font-size: 14px;
}

.glyph.ital {
    font-style: italic;
    font-weight: bold;
    font-size: 14px;
}

.glyph.under {
    text-decoration: underline;
    font-weight: bold;
}

.fmt-text svg {
    margin-left: -3px;
}

.fmt-align {
    width: 185px;
    padding-left: 12px;
    gap: 7px;
}

.valign {
    margin-left: 6px;
}

.valign + .valign {
    margin-left: 0;
}

.fmt-fill {
    width: 93px;
    padding-left: 9px;
}

.fmt-label {
    color: #333;
    font-size: 11px;
}

.swatch {
    width: 12px;
    height: 12px;
    margin: 0 16px 0 13px;
    border: 1px solid #ddd;
}

.fmt-border {
    width: 174px;
    padding-left: 9px;
}

.border-width {
    width: 22px;
    height: 17px;
    margin-left: 10px;
    padding-left: 1px;
    border-bottom: 1px solid #ccc;
    line-height: 15px;
}

.border-box {
    width: 12px;
    height: 12px;
    margin: 0 15px 0 15px;
    background-color: #d5d5d5;
}

.fmt-border svg:last-child {
    margin-left: 14px;
}

.fmt-coords {
    flex: 1;
    border-right: 0;
    padding-left: 9px;
}

.coord {
    width: 33px;
    height: 16px;
    border-bottom: 1px solid #ccc;
}

.fmt-coords b {
    width: 22px;
    padding-left: 1px;
    font-size: 9px;
    font-weight: normal;
    color: #555;
}

.lock {
    margin: 0 6px 0 -5px;
}

.eye {
    margin-left: -3px;
}

/* Workspace */
.workspace {
    flex: 1;
    min-height: 0;
    display: flex;
}

.sidebar {
    width: 261px;
    flex: none;
    display: flex;
    flex-direction: column;
    border-right: 1px solid #d0d0d0;
}

.pages-panel {
    height: 283px;
    flex: none;
    border-bottom: 1px solid #d0d0d0;
}

.library-panel {
    flex: 1;
    min-height: 0;
}

.panel-tabs {
    height: 37px;
    display: flex;
    background-color: #fafafa;
    border-bottom: 1px solid #d0d0d0;
    font-size: 12px;
}

.panel-tab {
    height: 36px;
    padding-top: 13px;
    color: #444;
    white-space: nowrap;
}

.panel-tab.active {
    color: #0a8fdc;
    font-weight: bold;
    letter-spacing: 0.3px;
    border-bottom: 3px solid #0a8fdc;
}

.pages-tab {
    width: 40px;
    margin-left: 14px;
}

.outline-tab {
    margin-left: 88px;
}

.libraries-tab {
    width: 62px;
    margin-left: 14px;
}

.masters-tab {
    margin-left: 73px;
}

.search-row {
    height: 34px;
    margin: 0 15px;
    display: flex;
    align-items: center;
    justify-content: flex-end;
    gap: 18px;
    padding: 0 3px 2px 3px;
    border-bottom: 1px solid #e4e4e4;
}

.search-glass {
    margin-right: auto;
}

.page-list {
    list-style: none;
    margin: 5px 0 0;
    padding: 0;
}

.page-list li {
    height: 27px;
    display: flex;
    align-items: center;
    gap: 7px;
    padding: 0 0 2px 28px;
    font-size: 11.5px;
    letter-spacing: 0.4px;
    color: #444;
}

.page-list li.selected {
    background-color: #dff9f8;
    font-weight: bold;
    color: #333;
}

.lib-search {
    padding-right: 9px;
}

.dots {
    margin-left: 3px;
}

.select-field {
    display: flex;
    align-items: center;
    justify-content: space-between;
    border-bottom: 1px solid #777;
    color: #333;
}

.lib-select {
    height: 31px;
    margin: 0 16px 0 15px;
    padding-top: 4px;
    font-size: 18px;
    letter-spacing: 0.2px;
}

.lib-group {
    margin: 13px 0 0 14px;
    font-size: 9.5px;
    color: #999;
}

.widget-grid {
    display: grid;
    grid-template-columns: 84px 89px 82px;
    grid-auto-rows: 74px;
    margin-top: 17px;
}

.widget {
    display: flex;
    flex-direction: column;
    align-items: center;
    font-size: 10px;
    color: #444;
}

.widget label {
    margin-top: 8px;
}

.widget svg {
    margin-bottom: -1px;
}

.w-box {
    width: 28px;
    height: 20px;
    margin: 4px 0 3px;
}

.w-box1 {
    border: 1px solid #888;
}

.w-box2 {
    background-color: #f2f2f2;
}

.w-box3 {
    background-color: #d5d5d5;
}

/* Editor */
.editor {
    flex: 1;
    min-width: 0;
    display: flex;
    flex-direction: column;
}

.doc-tabs {
    height: 21px;
    flex: none;
    display: flex;
    position: relative;
    background-color: #cfcfcf;
}

.doc-tab {
    width: 69px;
    display: flex;
    align-items: center;
    justify-content: space-between;
    padding: 0 5px 0 8px;
    background-color: #efefef;
    color: #999;
    font-size: 10px;
    letter-spacing: 0.2px;
    border-right: 1px solid #ddd;
}

.doc-tab.current {
    width: 68px;
    background-color: #fff;
    color: #333;
    border-right: 0;
}

.tab-x {
    font-size: 14px;
    font-weight: normal;
    color: #777;
}

.doc-caret {
    position: absolute;
    right: 6px;
    top: 9px;
    border-left: 4.5px solid transparent;
    border-right: 4.5px solid transparent;
    border-top: 5px solid #777;
}

.ruler-top {
    height: 17px;
    flex: none;
    display: flex;
    border-bottom: 1px solid #d0d0d0;
}

.ruler-corner {
    width: 16px;
    flex: none;
    display: flex;
    align-items: center;
    justify-content: center;
    border-right: 1px solid #d0d0d0;
}

.h-ruler {
    flex: 1;
    position: relative;
    background-color: #fff;
    background-image:
        linear-gradient(#f4f4f4, #f4f4f4),
        linear-gradient(#f4f4f4, #f4f4f4),
        repeating-linear-gradient(to right, #bbb 0, #bbb 1px, transparent 1px, transparent 148px),
        repeating-linear-gradient(to right, #bbb 0, #bbb 1px, transparent 1px, transparent 74px),
        repeating-linear-gradient(to right, #bbb 0, #bbb 1px, transparent 1px, transparent 14.8px);
    background-repeat: no-repeat, no-repeat, repeat-x, repeat-x, repeat-x;
    background-size: 79px 100%, 46px 100%, 100% 100%, 100% 8px, 100% 4px;
    background-position: left top, right top, -69px top, -69px bottom, -69px bottom;
    background-blend-mode: multiply;
}

.h-mark {
    position: absolute;
    top: 2px;
    font-size: 10px;
    letter-spacing: 0.3px;
    line-height: 12px;
    color: #a0a0a0;
    background-color: transparent;
}

.mark-0 { left: 82px; }
.mark-400 { left: 230px; }
.mark-800 { left: 378px; }
.mark-1200 { left: 526px; }
.mark-1600 { left: 674px; }
.mark-2000 { left: 823px; }

.canvas-row {
    flex: 1;
    min-height: 0;
    display: flex;
}

.v-ruler {
    width: 16px;
    flex: none;
    position: relative;
    border-right: 1px solid #d0d0d0;
    background-color: #fff;
    background-image:
        repeating-linear-gradient(to bottom, #bbb 0, #bbb 1px, transparent 1px, transparent 148px),
        repeating-linear-gradient(to bottom, #bbb 0, #bbb 1px, transparent 1px, transparent 74px),
        repeating-linear-gradient(to bottom, #bbb 0, #bbb 1px, transparent 1px, transparent 14.8px);
    background-repeat: repeat-y;
    background-size: 100% 100%, 8px 100%, 4px 100%;
    background-position: left 0, right 0, right 0;
}

.v-mark {
    position: absolute;
    left: 1px;
    font-size: 10px;
    line-height: 12px;
    color: #999;
    background-color: #fff;
    writing-mode: vertical-rl;
    transform: rotate(180deg);
}

.vm-0 { top: 3px; }
.vm-400 { top: 152px; }
.vm-800 { top: 300px; }
.vm-1200 { top: 446px; }

.canvas {
    flex: 1;
    min-width: 0;
    position: relative;
    overflow: hidden;
    background-color: #e4e4e4;
    padding-left: 78px;
}

.page-sheet {
    width: 703px;
    height: 100%;
    background-color: #fff;
}

/* Wireframe */
.artboard {
    width: 703px;
    height: 444px;
    display: flex;
    border: 2.5px solid #000;
    border-radius: 38px;
    font-family: "Liberation Sans", Arial, sans-serif;
}

.art-left {
    width: 266px;
    flex: none;
    display: flex;
    padding: 137px 0 0 78px;
    border-right: 2px solid #000;
}

.art-right {
    flex: 1;
    display: flex;
    flex-direction: column;
    padding-left: 32px;
}

.login-title {
    width: 316px;
    margin: 93px 0 0 24px;
    text-align: center;
    font-size: 27px;
    line-height: 30px;
    font-weight: bold;
    letter-spacing: -0.2px;
    color: #333;
}

.login-input {
    width: 317px;
    height: 33px;
    margin: 13px 0 0 30px;
    line-height: 33px;
    border: 1px solid #c4c4c4;
    border-radius: 17px;
    background-color: #fff;
    text-align: center;
    font-size: 20px;
    color: #444;
    box-shadow: 5px 5px 4px #999;
}

.login-input + .login-input {
    margin-top: 22px;
}

.login-input.muted {
    color: #888;
}

.login-button {
    width: 317px;
    height: 40px;
    margin: 23px 0 0 24px;
    position: relative;
    line-height: 41px;
    border-radius: 20px;
    background-color: #1e98d7;
    text-align: center;
    font-size: 20px;
    color: #fff;
    box-shadow: 5px 5px 4px #999;
}

.interaction-badge {
    position: absolute;
    right: -3px;
    top: -7px;
    width: 16px;
    height: 14px;
    display: flex;
    align-items: center;
    justify-content: center;
    background-color: #ffee33;
    border: 1px solid #ddd27a;
}

.forgot {
    width: 317px;
    margin: 21px 0 0 30px;
    text-align: center;
    font-size: 13.8px;
    line-height: 16px;
    color: #1e98d7;
}

.signup {
    margin: 85px 0 0 0;
    font-size: 14px;
    line-height: 16px;
    color: #222;
}

.signup a {
    color: #1e98d7;
}

.scroll-v {
    position: absolute;
    right: 2px;
    top: 223px;
    width: 9px;
    height: 81px;
    background-color: #ececec;
    border: 1px solid #f8f8f8;
    border-radius: 4px;
}

.scroll-h {
    position: absolute;
    left: 370px;
    bottom: 2px;
    width: 78px;
    height: 7px;
    border-radius: 4px;
    background-color: #cfcfcf;
}

/* Inspector */
.inspector {
    width: 261px;
    flex: none;
    border-left: 1px solid #d0d0d0;
}

.style-tab {
    width: 37px;
    margin-left: 14px;
}

.interactions-tab {
    margin-left: 34px;
}

.notes-tab {
    margin-left: 35px;
}

.insp-label {
    font-size: 9.5px;
    color: #888;
}

.dims {
    height: 157px;
    padding: 15px 16px 0 15px;
    border-bottom: 2px solid #e9e9e9;
}

.web-select {
    height: 30px;
    margin-top: 5px;
    padding-top: 6px;
    font-size: 14px;
    letter-spacing: 0.2px;
}

.width-row {
    display: flex;
    margin-top: 15px;
}

.width-value {
    width: 86px;
    height: 22px;
    padding-top: 1px;
    border-bottom: 1px solid #777;
    font-size: 14px;
    letter-spacing: 0.2px;
}

.width-unit {
    font-size: 10px;
    color: #777;
    padding-top: 5px;
}

.adaptive {
    display: block;
    margin-top: 18px;
    font-size: 12px;
    letter-spacing: 0.25px;
    text-decoration: underline;
    color: #444;
}

.style-name {
    height: 44px;
    display: flex;
    align-items: center;
    justify-content: space-between;
    padding: 0 17px 4px 15px;
    border-bottom: 1px solid #e4e4e4;
    font-size: 18px;
    letter-spacing: 0.2px;
}

.align-row {
    height: 43px;
    display: flex;
    padding: 12px 0 0 15px;
    border-bottom: 1px solid #e4e4e4;
}

.align-row .insp-label {
    width: 87px;
}

.align-btns {
    display: flex;
    gap: 9px;
    margin: 5px 0 0 0;
}

.insp-fill {
    display: flex;
    padding: 13px 0 0 15px;
}

.insp-fill .insp-label {
    width: 84px;
}

.fill-option {
    width: 57px;
    display: flex;
    flex-direction: column;
    align-items: flex-start;
    font-size: 10px;
    color: #555;
}

.fill-option label {
    margin-top: 3px;
    width: 32px;
    text-align: center;
}

.fill-btn {
    width: 32px;
    height: 20px;
    margin-top: 1px;
    display: flex;
    align-items: center;
    justify-content: center;
    border: 1px solid #ccc;
    border-radius: 2px;
}

.insp-lowfi {
    display: flex;
    padding: 27px 0 0 15px;
}

.insp-lowfi .insp-label {
    width: 84px;
    padding-top: 1px;
}

.lowfi-btn {
    width: 34px;
    height: 28px;
    display: flex;
    align-items: center;
    justify-content: center;
    border: 1px solid #ccc;
    border-radius: 2px;
}

.insp-lowfi p {
    margin: 0 0 0 25px;
    font-size: 10px;
    line-height: 14px;
    color: #444;
    white-space: nowrap;
}

/* Taskbar */
.taskbar {
    height: 50px;
    display: flex;
    position: relative;
    background-color: #eeeeee;
    border-top: 2px solid #1f4a6b;
}

.weather {
    width: 162px;
    flex: none;
    padding: 11px 0 0 21px;
    position: relative;
}

.notify-red,
.notify-blue {
    position: absolute;
    width: 15px;
    height: 15px;
    display: flex;
    align-items: center;
    justify-content: center;
    border-radius: 50%;
    color: #fff;
    font-size: 10px;
    font-family: "Liberation Sans", sans-serif;
}

.notify-red {
    left: 31px;
    top: 7px;
    background-color: #c42b1c;
}

.notify-blue {
    left: 26px;
    top: 5px;
    background-color: #0f78d4;
}

.task-icons {
    display: flex;
}

.slot {
    width: 44px;
    height: 48px;
    padding-bottom: 2px;
    display: flex;
    align-items: center;
    justify-content: center;
    position: relative;
}

.slot.running::after {
    content: "";
    position: absolute;
    left: 19px;
    bottom: 5px;
    width: 6px;
    height: 3px;
    border-radius: 2px;
    background-color: #888;
}

.slot.highlighted {
    background-color: #eab0aa;
    width: 40px;
    height: 40px;
    margin: 4px 2px 0;
    border-radius: 4px;
}

.slot.highlighted::after {
    content: "";
    position: absolute;
    left: 17px;
    bottom: 2px;
    width: 6px;
    height: 3px;
    border-radius: 2px;
    background-color: #d42020;
}

.slot.active-app {
    background-color: #f8f8f8;
    width: 38px;
    height: 40px;
    margin: 4px 3px 0;
    border-radius: 4px;
}

.slot.active-app::after {
    content: "";
    position: absolute;
    left: 11px;
    bottom: 2px;
    width: 16px;
    height: 3px;
    border-radius: 2px;
    background-color: #0a84d8;
}

.icon-text {
    font-family: "Liberation Sans", sans-serif;
    text-anchor: middle;
    fill: #fff;
}

.help-q {
    font-size: 16px;
    font-weight: bold;
}

.zm {
    font-size: 11px;
    font-weight: bold;
}

.myhp {
    font-size: 8px;
    font-style: italic;
}

.word {
    font-size: 10px;
    font-weight: bold;
}

.tray {
    flex: 1;
    display: flex;
    align-items: center;
    position: relative;
    height: 48px;
}

.tray-chevron {
    margin-left: 68px;
}

.tray-send {
    margin-left: 19px;
}

.tray-wifi {
    margin-left: 16px;
}

.tray-sound {
    margin-left: 8px;
}

.tray-battery {
    margin-left: 8px;
}

.clock {
    margin-left: 16px;
    display: flex;
    flex-direction: column;
    align-items: center;
    gap: 2px;
    font-family: "Open Sans", sans-serif;
    font-size: 11.5px;
    line-height: 14px;
    color: #222;
    white-space: nowrap;
}
```
